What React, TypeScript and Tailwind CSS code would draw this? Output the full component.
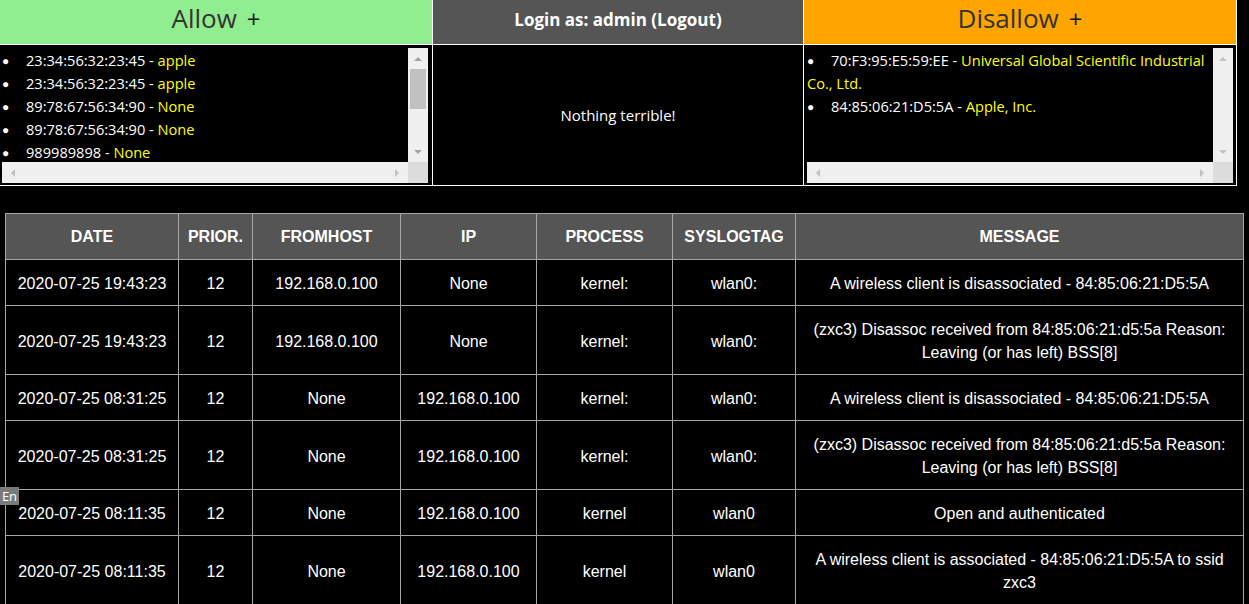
import React from "react";

const allowList = [
  { mac: "23:34:56:32:23:45", vendor: "apple" },
  { mac: "23:34:56:32:23:45", vendor: "apple" },
  { mac: "89:78:67:56:34:90", vendor: "None" },
  { mac: "89:78:67:56:34:90", vendor: "None" },
  { mac: "989989898", vendor: "None" },
];

const logs = [
  ["2020-07-25 19:43:23", "12", "192.168.0.100", "None", "kernel:", "wlan0:", "A wireless client is disassociated - 84:85:06:21:D5:5A"],
  ["2020-07-25 19:43:23", "12", "192.168.0.100", "None", "kernel:", "wlan0:", "(zxc3) Disassoc received from 84:85:06:21:d5:5a Reason: Leaving (or has left) BSS[8]"],
  ["2020-07-25 08:31:25", "12", "None", "192.168.0.100", "kernel:", "wlan0:", "A wireless client is disassociated - 84:85:06:21:D5:5A"],
  ["2020-07-25 08:31:25", "12", "None", "192.168.0.100", "kernel:", "wlan0:", "(zxc3) Disassoc received from 84:85:06:21:d5:5a Reason: Leaving (or has left) BSS[8]"],
  ["2020-07-25 08:11:35", "12", "None", "192.168.0.100", "kernel", "wlan0", "Open and authenticated"],
  ["2020-07-25 08:11:35", "12", "None", "192.168.0.100", "kernel", "wlan0", "A wireless client is associated - 84:85:06:21:D5:5A to ssid zxc3"],
];

const columns = [
  { name: "DATE", w: "w-[173px]" },
  { name: "PRIOR.", w: "w-[74px]" },
  { name: "FROMHOST", w: "w-[148px]" },
  { name: "IP", w: "w-[136px]" },
  { name: "PROCESS", w: "w-[136px]" },
  { name: "SYSLOGTAG", w: "w-[123px]" },
  { name: "MESSAGE", w: "w-[448px]" },
];

function Arrow({ dir, light }: { dir: "up" | "down" | "left" | "right"; light?: boolean }) {
  const pts = {
    up: "0,4 4,0 8,4",
    down: "0,0 8,0 4,4",
    left: "4,0 4,8 0,4",
    right: "0,0 4,4 0,8",
  }[dir];
  const vertical = dir === "up" || dir === "down";
  return (
    <svg width={vertical ? 8 : 4} height={vertical ? 4 : 8} viewBox={vertical ? "0 0 8 4" : "0 0 4 8"}>
      <polygon points={pts} fill={light ? "#c2c2c2" : "#a3a3a3"} />
    </svg>
  );
}

function ScrollBox({ children, thumb }: { children: React.ReactNode; thumb?: boolean }) {
  return (
    <div className="flex flex-col w-[426px] h-[135px]">
      <div className="flex h-[114px]">
        <div className="flex-1 overflow-hidden">{children}</div>
        <div className="w-[20px] bg-[#f0f0f0] flex flex-col items-center">
          <div className="h-[21px] flex items-center justify-center">
            <Arrow dir="up" light={!thumb} />
          </div>
          <div className="flex-1 w-full px-[2px]">
            {thumb && <div className="h-[40px] bg-[#c1c1c1]" />}
          </div>
          <div className="h-[21px] flex items-center justify-center">
            <Arrow dir="down" light={!thumb} />
          </div>
        </div>
      </div>
      <div className="flex h-[21px]">
        <div className="flex-1 bg-[#f0f0f0] flex items-center justify-between px-[9px]">
          <Arrow dir="left" light />
          <Arrow dir="right" light />
        </div>
        <div className="w-[20px] bg-[#dcdcdc]" />
      </div>
    </div>
  );
}

function Bullet() {
  return <span className="inline-block w-[24px] text-[12px] align-top">●</span>;
}

export default function App() {
  return (
    <div className="relative min-h-screen bg-black text-white">
      {/* top panel */}
      <div className="flex border-b border-white w-[1237px]">
        <div className="w-[433px] border-r border-white flex flex-col">
          <div className="h-[45px] pb-[7px] bg-[#90ee90] border-b border-white flex items-center justify-center text-[#333] text-[26px] [font-family:'Open_Sans',sans-serif]">
            Allow <span className="ml-[10px] text-[#111] text-[24px]">+</span>
          </div>
          <div className="h-[140px] pt-[3px] pl-[2px]">
            <ScrollBox thumb>
              <ul className="text-[14.6px] leading-[23px] pt-px [font-family:'Open_Sans',sans-serif]">
                {allowList.map((item, i) => (
                  <li key={i} className="whitespace-nowrap">
                    <Bullet />
                    {item.mac} - <span className="text-[#ffff00]">{item.vendor}</span>
                  </li>
                ))}
              </ul>
            </ScrollBox>
          </div>
        </div>
        <div className="w-[371px] border-r border-white flex flex-col">
          <div className="h-[45px] pb-[4px] bg-[#555555] border-b border-white flex items-center justify-center font-bold text-[17px] [font-family:'Open_Sans',sans-serif]">
            Login as: admin (Logout)
          </div>
          <div className="h-[140px] flex items-center justify-center text-[15px] [font-family:'Open_Sans',sans-serif]">
            Nothing terrible!
          </div>
        </div>
        <div className="w-[433px] border-r border-white flex flex-col">
          <div className="h-[45px] pb-[7px] bg-[#ffa500] border-b border-white flex items-center justify-center text-[#333] text-[26px] [font-family:'Open_Sans',sans-serif]">
            Disallow <span className="ml-[10px] text-[#111] text-[24px]">+</span>
          </div>
          <div className="h-[140px] pt-[3px] pl-[3px]">
            <ScrollBox>
              <ul className="text-[14.6px] leading-[23px] pt-px [font-family:'Open_Sans',sans-serif]">
                <li className="whitespace-nowrap">
                  <Bullet />
                  70:F3:95:E5:59:EE - <span className="text-[#ffff00]">Universal Global Scientific Industrial</span>
                  <br />
                  <span className="text-[#ffff00]">Co., Ltd.</span>
                </li>
                <li className="whitespace-nowrap">
                  <Bullet />
                  84:85:06:21:D5:5A - <span className="text-[#ffff00]">Apple, Inc.</span>
                </li>
              </ul>
            </ScrollBox>
          </div>
        </div>
      </div>

      {/* log table */}
      <table className="table-fixed border-collapse ml-[5px] mt-[27px] w-[1239px] text-[16px] leading-[23px] [font-family:'Liberation_Sans',Arial,sans-serif]">
        <colgroup>
          {columns.map((c) => (
            <col key={c.name} className={c.w} />
          ))}
        </colgroup>
        <thead>
          <tr className="bg-[#555555]">
            {columns.map((c) => (
              <th key={c.name} className="border border-[#a6a6a6] py-[11px] px-[4px] font-bold text-center whitespace-nowrap">
                {c.name}
              </th>
            ))}
          </tr>
        </thead>
        <tbody>
          {logs.map((row, i) => (
            <tr key={i}>
              {row.map((cell, j) => (
                <td
                  key={j}
                  className={
                    j === 6
                      ? "border border-[#a6a6a6] pt-[12px] pb-[10px] px-[12px] text-center"
                      : "border border-[#a6a6a6] pt-[12px] pb-[10px] px-[4px] text-center whitespace-nowrap"
                  }
                >
                  {cell}
                </td>
              ))}
            </tr>
          ))}
        </tbody>
      </table>

      <div className="absolute left-0 top-[487px] w-[19px] h-[18px] bg-[#7a7a7a] text-white text-[13px] leading-[18px] text-center [font-family:'Open_Sans',sans-serif]">
        En
      </div>
    </div>
  );
}
